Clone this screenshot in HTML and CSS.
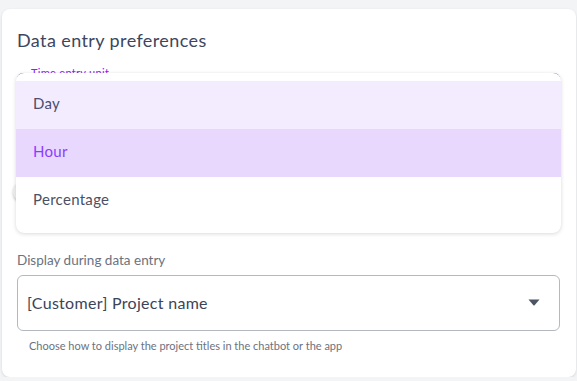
FILE: index.html
```html
<!DOCTYPE html>
<html>
<head>
    <title>Data entry preferences</title>
    <meta charset="utf-8">
    <meta name="viewport" content="width=device-width, initial-scale=1">
    <link rel="stylesheet" href="styles.css">
</head>
<body>
    <div class="card">
        <h2 class="card-title">Data entry preferences</h2>

        <!-- Time entry unit (menu open) -->
        <div class="field-wrap">
            <div class="field focused">
                <span class="field-label">Time entry unit</span>
            </div>
            <ul class="menu">
                <li class="menu-item hover">Day</li>
                <li class="menu-item selected">Hour</li>
                <li class="menu-item">Percentage</li>
            </ul>
        </div>

        <div class="switch-row">
            <span class="switch">
                <span class="switch-track"></span>
                <span class="switch-thumb"></span>
            </span>
        </div>

        <!-- Project display -->
        <div class="group">
            <label class="group-label">Display during data entry</label>
            <div class="select">
                <span>[Customer] Project name</span>
                <svg class="caret" width="12" height="7" viewBox="0 0 12 7">
                    <path d="M0.5 0.5 H11.5 L6.6 6.2 Q6 6.8 5.4 6.2 Z" fill="#4b5563"/>
                </svg>
            </div>
            <div class="hint">Choose how to display the project titles in the chatbot or the app</div>
        </div>
    </div>
</body>
</html>
```

FILE: styles.css
```css
body {
    margin: 0;
    padding: 9px 1px 0 2px;
    background-color: #f3f4f6;
    font-family: Lato, "Open Sans", sans-serif;
    letter-spacing: 0.3px;
}

.card {
    background-color: white;
    border-radius: 8px;
    box-shadow: 0 1px 3px rgba(0,0,0,0.12);
    padding: 19px 16px 24px 15px;
}

.card-title {
    margin: 0;
    font-size: 18px;
    line-height: 24px;
    font-weight: 400;
    color: #3d465e;
    letter-spacing: 0.4px;
}

.field-wrap {
    position: relative;
    margin-top: 21px;
}

.field {
    height: 56px;
    border: 2px solid #8b2cf5;
    border-radius: 6px;
    box-sizing: border-box;
    position: relative;
}

.field-label {
    position: absolute;
    top: -8px;
    left: 10px;
    padding: 0 2px;
    background: white;
    font-size: 11px;
    line-height: 12px;
    color: #8a20ff;
}

.menu {
    position: absolute;
    top: 0;
    left: -1px;
    right: -1px;
    z-index: 2;
    margin: 0;
    padding: 8px 0;
    list-style: none;
    background: white;
    border-radius: 8px;
    box-shadow: 0 1px 4px rgba(0,0,0,0.14), 0 0 1px rgba(0,0,0,0.08);
}

.menu-item {
    height: 48px;
    line-height: 44px;
    padding-left: 17px;
    box-sizing: border-box;
    font-size: 15px;
    color: #4a5166;
}

.menu-item.hover {
    background-color: #f3ebfe;
    color: #4b4e6c;
}

.menu-item.selected {
    background-color: #e8d8fd;
    color: #8b3dff;
}

.switch-row {
    margin-top: 43px;
    height: 40px;
    display: flex;
    align-items: center;
}

.switch {
    position: relative;
    width: 40px;
    height: 20px;
    margin-left: -4px;
}

.switch-track {
    position: absolute;
    left: 4px;
    right: 4px;
    top: 3px;
    height: 14px;
    border-radius: 7px;
    background: #d1d5db;
}

.switch-thumb {
    position: absolute;
    left: 0;
    top: 0;
    width: 20px;
    height: 20px;
    border-radius: 50%;
    background: #f1f1f1;
    box-shadow: 0 1px 3px rgba(0,0,0,0.25);
}

.group {
    margin-top: 38px;
}

.group-label {
    display: block;
    font-size: 13.5px;
    line-height: 20px;
    letter-spacing: 0;
    color: #6b7280;
    margin-bottom: 5px;
}

.select {
    height: 56px;
    border: 1px solid #b5b8bf;
    border-radius: 6px;
    box-sizing: border-box;
    display: flex;
    align-items: center;
    justify-content: space-between;
    padding: 0 19px 2px 9px;
    font-size: 16px;
    color: #3b4458;
}

.hint {
    margin-top: 8px;
    padding-left: 12px;
    font-size: 11px;
    line-height: 14px;
    letter-spacing: 0;
    color: #6b7280;
}
```
